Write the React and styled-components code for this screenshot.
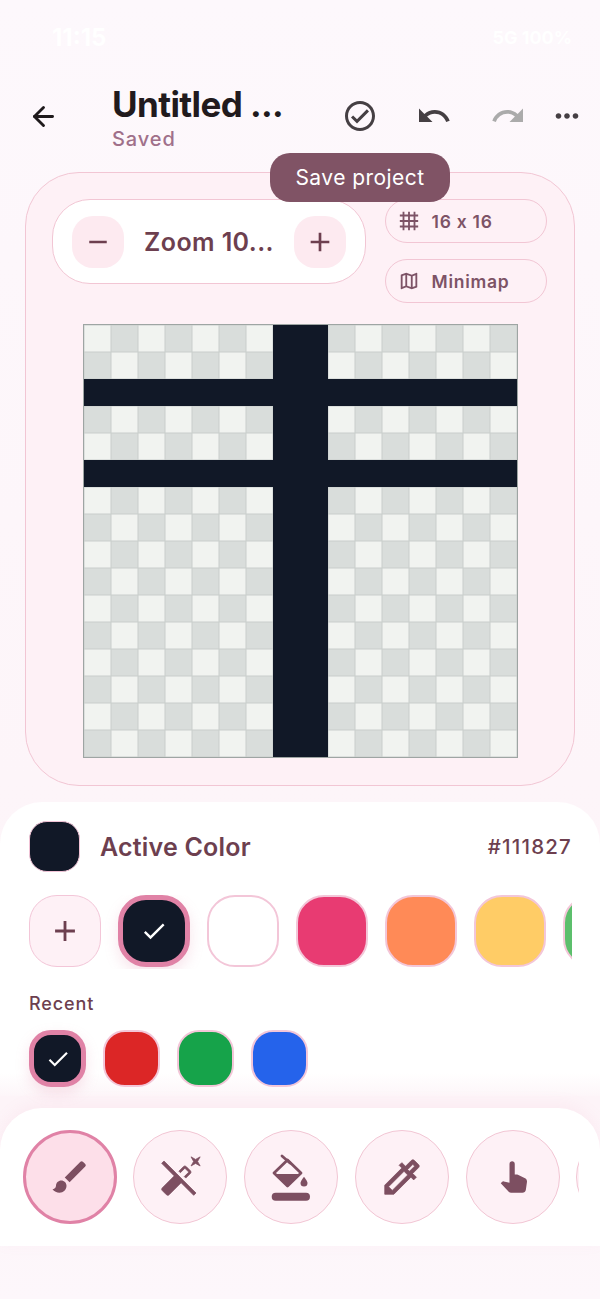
import React from "react";
import styled, { createGlobalStyle } from "styled-components";
import {
  MdAdd,
  MdAutoFixOff,
  MdBrush,
  MdCheck,
  MdGrid4X4,
  MdMoreHoriz,
  MdOutlineCheckCircle,
  MdOutlineColorize,
  MdOutlineMap,
  MdPanToolAlt,
  MdRedo,
  MdRemove,
  MdUndo,
} from "react-icons/md";
import { ArrowLeft } from "lucide-react";

const GlobalStyle = createGlobalStyle`
  html, body {
    margin: 0;
    padding: 0;
    background: #fdf7fb;
    font-family: Inter, "Liberation Sans", sans-serif;
  }
  * { box-sizing: border-box; }
`;

const Screen = styled.div`
  position: relative;
  width: 600px;
  height: 1299px;
  overflow: hidden;
  display: flex;
  flex-direction: column;
  background: linear-gradient(#fdf8fc 0%, #fdf5f9 60%, #fdf4f8 85%, #fdf7fb 100%);
`;

const StatusBar = styled.div`
  height: 81px;
  padding: 26px 28px 0 52px;
  display: flex;
  justify-content: space-between;
  color: #ffffff;
  line-height: 24px;
`;

const Clock = styled.span`
  font-size: 24px;
  font-weight: 700;
`;

const Signal = styled.span`
  font-size: 18px;
  font-weight: 700;
`;

const Header = styled.header`
  height: 70px;
  padding: 0 22px 0 28px;
  display: flex;
  align-items: center;
`;

const BackButton = styled.div`
  flex: none;
  width: 84px;
  display: flex;
  color: #1f1a1c;
`;

const TitleBlock = styled.div`
  flex: none;
  width: 216px;
  align-self: flex-start;
  padding-top: 3px;
  display: flex;
  flex-direction: column;
`;

const Title = styled.div`
  font-size: 35px;
  font-weight: 700;
  line-height: 40px;
  letter-spacing: -0.6px;
  color: #211a1d;
  white-space: nowrap;
`;

const Saved = styled.div`
  margin-top: 2px;
  font-size: 20px;
  line-height: 26px;
  letter-spacing: 0.9px;
  font-weight: 500;
  color: #a0708a;
`;

const Actions = styled.div`
  flex: none;
  display: flex;
  align-items: center;
`;

const ActionIcon = styled.div`
  width: ${(p) => p.$w}px;
  display: flex;
  justify-content: center;
  color: ${(p) => p.$color || "#453f43"};
`;

const Tooltip = styled.div`
  position: absolute;
  left: 270px;
  top: 153px;
  width: 180px;
  height: 49px;
  border-radius: 20px;
  background: #805365;
  color: #ffffff;
  font-size: 21px;
  font-weight: 400;
  letter-spacing: 0.45px;
  display: flex;
  align-items: center;
  justify-content: center;
  z-index: 2;
`;

const CanvasPanel = styled.section`
  margin: 21px 25px 0;
  height: 614px;
  padding: 26px 26px 0 26px;
  border: 1.5px solid #f2c6d4;
  border-radius: 54px;
  background: #fef1f6;
`;

const Controls = styled.div`
  display: flex;
  gap: 19px;
`;

const ZoomPill = styled.div`
  width: 314px;
  height: 85px;
  border: 1.5px solid #f2c6d4;
  border-radius: 38px;
  background: #ffffff;
  padding: 0 19px;
  display: flex;
  align-items: center;
  justify-content: space-between;
`;

const ZoomButton = styled.div`
  width: 52px;
  height: 52px;
  border-radius: 21px;
  background: #fdeaf0;
  color: #6d3f4f;
  display: flex;
  align-items: center;
  justify-content: center;
`;

const ZoomLabel = styled.div`
  font-size: 25px;
  font-weight: 600;
  letter-spacing: 0.4px;
  color: #6d3f4f;
  white-space: nowrap;
`;

const ChipColumn = styled.div`
  display: flex;
  flex-direction: column;
  gap: 16px;
`;

const Chip = styled.div`
  width: 162px;
  height: 44px;
  border: 1.5px solid #f2c6d4;
  border-radius: 22px;
  padding-left: 12px;
  display: flex;
  align-items: center;
  gap: 11.5px;
  color: #7d5366;
  font-size: 17.5px;
  font-weight: 600;
  letter-spacing: 0.75px;
`;

const PixelGrid = styled.div`
  margin: 21px 0 0 31px;
  width: 435px;
  height: 434px;
  border: 1px solid #9ea5a3;
  display: grid;
  grid-template-columns: repeat(16, 1fr);
  grid-template-rows: repeat(16, 1fr);
  background: #111827;
`;

const Pixel = styled.div`
  background: ${(p) => (p.$ink ? "#111827" : p.$alt ? "#d9dddb" : "#f1f3f0")};
  box-shadow: ${(p) => (p.$ink ? "none" : "inset 0 0 0 0.5px #c9cecb")};
`;

const ColorPanel = styled.section`
  margin-top: 16px;
  height: 294px;
  padding: 19px 28px 0 29px;
  background: linear-gradient(#ffffff 92%, #fdf6f9 100%);
  border-radius: 42px 42px 0 0;
`;

const ActiveRow = styled.div`
  display: flex;
  align-items: center;
  gap: 20px;
`;

const ActiveSwatch = styled.div`
  width: 51px;
  height: 51px;
  border-radius: 18px;
  border: 1.5px solid #f1c3d6;
  background: #111827;
`;

const ActiveLabel = styled.div`
  flex: 1;
  font-size: 25px;
  font-weight: 600;
  letter-spacing: 0.2px;
  color: #6d3f4f;
`;

const HexValue = styled.div`
  font-size: 20.5px;
  font-weight: 500;
  letter-spacing: 1.2px;
  color: #6d3f4f;
`;

const SwatchRow = styled.div`
  margin-top: 23px;
  display: flex;
  gap: 17px;
  overflow: hidden;
  width: 543px;
  padding-bottom: 2px;
`;

const Swatch = styled.div`
  flex: none;
  width: ${(p) => p.$size}px;
  height: ${(p) => p.$size}px;
  border-radius: ${(p) => Math.round(p.$size * 0.39)}px;
  background: ${(p) => p.$color};
  border: ${(p) => (p.$active ? "5px solid #e082a6" : "2px solid #f3c6d8")};
  box-shadow: ${(p) => (p.$active ? "0 6px 14px rgba(224, 130, 166, 0.22)" : "none")};
  color: #ffffff;
  display: flex;
  align-items: center;
  justify-content: center;
`;

const AddSwatch = styled(Swatch)`
  color: #6d3f4f;
  border-width: 1.5px;
`;

const RecentLabel = styled.div`
  margin-top: 23px;
  font-size: 18px;
  font-weight: 500;
  letter-spacing: 0.9px;
  line-height: 24px;
  color: #6d3f4f;
`;

const RecentRow = styled.div`
  margin-top: 14px;
  display: flex;
  gap: 17px;
`;

const ToolPanel = styled.section`
  margin-top: 12px;
  height: 138px;
  padding: 22px 0 0 22.5px;
  background: #ffffff;
  border-radius: 42px 42px 0 0;
  box-shadow: 0 -4px 16px rgba(224, 130, 166, 0.08);
`;

const ToolRow = styled.div`
  width: 556px;
  display: flex;
  gap: 16.75px;
  overflow: hidden;
`;

const ToolButton = styled.div`
  flex: none;
  width: 94px;
  height: 94px;
  border-radius: 50%;
  background: ${(p) => (p.$active ? "#fddfe9" : "#fef1f6")};
  border: ${(p) => (p.$active ? "3px solid #e082a6" : "1.5px solid #f2c6d4")};
  color: #7d4f61;
  display: flex;
  align-items: center;
  justify-content: center;
  /* icons carry an empty 24x24 path, keep it out of the thicker stroke */
  svg path[d^="M0 0h24"] {
    stroke: none;
  }
`;

// Rounded paint bucket, the icon packs only have the square-barred one
const FillIcon = () => (
  <svg width="52" height="52" viewBox="0 0 52 52" fill="currentColor">
    <path d="M17 5 L25 12" stroke="currentColor" strokeWidth="2.8" strokeLinecap="round" />
    <path
      d="M9 22 L22.5 9 L36 22 L22.5 35 Z"
      fill="none"
      stroke="currentColor"
      strokeWidth="2.8"
      strokeLinejoin="round"
    />
    <path d="M11 23 H34 L22.5 35 Z" />
    <path d="M39 25.7 C39 25.7 35.5 30 35.5 32 a3.5 3.5 0 0 0 7 0 C42.5 30 39 25.7 39 25.7 Z" />
    <rect x="6.7" y="41.7" width="38.3" height="8" rx="4" />
  </svg>
);

const palette = ["#ffffff", "#e83b72", "#ff8a57", "#ffcc66", "#5cbf6c"];
const recent = ["#dc2626", "#16a34a", "#2563eb"];
const inkRows = [2, 5];
const inkCols = [7, 8];

const cells = [];
for (let r = 0; r < 16; r++) {
  for (let c = 0; c < 16; c++) {
    cells.push({
      id: r + "-" + c,
      ink: inkRows.includes(r) || inkCols.includes(c),
      alt: (r + c) % 2 === 1,
    });
  }
}

const App = () => {
  return (
    <Screen>
      <GlobalStyle />
      <StatusBar>
        <Clock>11:15</Clock>
        <Signal>5G 100%</Signal>
      </StatusBar>
      <Header>
        <BackButton>
          <ArrowLeft size={31} strokeWidth={2.2} />
        </BackButton>
        <TitleBlock>
          <Title>Untitled ...</Title>
          <Saved>Saved</Saved>
        </TitleBlock>
        <Actions>
          <ActionIcon $w={64}>
            <MdOutlineCheckCircle size={36} />
          </ActionIcon>
          <ActionIcon $w={84}>
            <MdUndo size={36} />
          </ActionIcon>
          <ActionIcon $w={64} $color="#ababab">
            <MdRedo size={36} />
          </ActionIcon>
          <ActionIcon $w={54}>
            <MdMoreHoriz size={34} />
          </ActionIcon>
        </Actions>
      </Header>
      <Tooltip>Save project</Tooltip>
      <CanvasPanel>
        <Controls>
          <ZoomPill>
            <ZoomButton>
              <MdRemove size={30} />
            </ZoomButton>
            <ZoomLabel>Zoom 10...</ZoomLabel>
            <ZoomButton>
              <MdAdd size={32} />
            </ZoomButton>
          </ZoomPill>
          <ChipColumn>
            <Chip>
              <MdGrid4X4 size={22} />
              16 x 16
            </Chip>
            <Chip>
              <MdOutlineMap size={22} />
              Minimap
            </Chip>
          </ChipColumn>
        </Controls>
        <PixelGrid>
          {cells.map((cell) => (
            <Pixel key={cell.id} $ink={cell.ink} $alt={cell.alt} />
          ))}
        </PixelGrid>
      </CanvasPanel>
      <ColorPanel>
        <ActiveRow>
          <ActiveSwatch />
          <ActiveLabel>Active Color</ActiveLabel>
          <HexValue>#111827</HexValue>
        </ActiveRow>
        <SwatchRow>
          <AddSwatch $size={72} $color="#fef1f6">
            <MdAdd size={34} />
          </AddSwatch>
          <Swatch $size={72} $color="#111827" $active>
            <MdCheck size={28} />
          </Swatch>
          {palette.map((color) => (
            <Swatch key={color} $size={72} $color={color} />
          ))}
        </SwatchRow>
        <RecentLabel>Recent</RecentLabel>
        <RecentRow>
          <Swatch $size={57} $color="#111827" $active>
            <MdCheck size={26} />
          </Swatch>
          {recent.map((color) => (
            <Swatch key={color} $size={57} $color={color} />
          ))}
        </RecentRow>
      </ColorPanel>
      <ToolPanel>
        <ToolRow>
          <ToolButton $active>
            <MdBrush size={42} />
          </ToolButton>
          <ToolButton>
            <MdAutoFixOff size={44} strokeWidth={0.4} />
          </ToolButton>
          <ToolButton>
            <FillIcon />
          </ToolButton>
          <ToolButton>
            <MdOutlineColorize size={46} strokeWidth={0.4} />
          </ToolButton>
          <ToolButton>
            <MdPanToolAlt size={42} />
          </ToolButton>
          <ToolButton />
        </ToolRow>
      </ToolPanel>
    </Screen>
  );
};

export default App;
